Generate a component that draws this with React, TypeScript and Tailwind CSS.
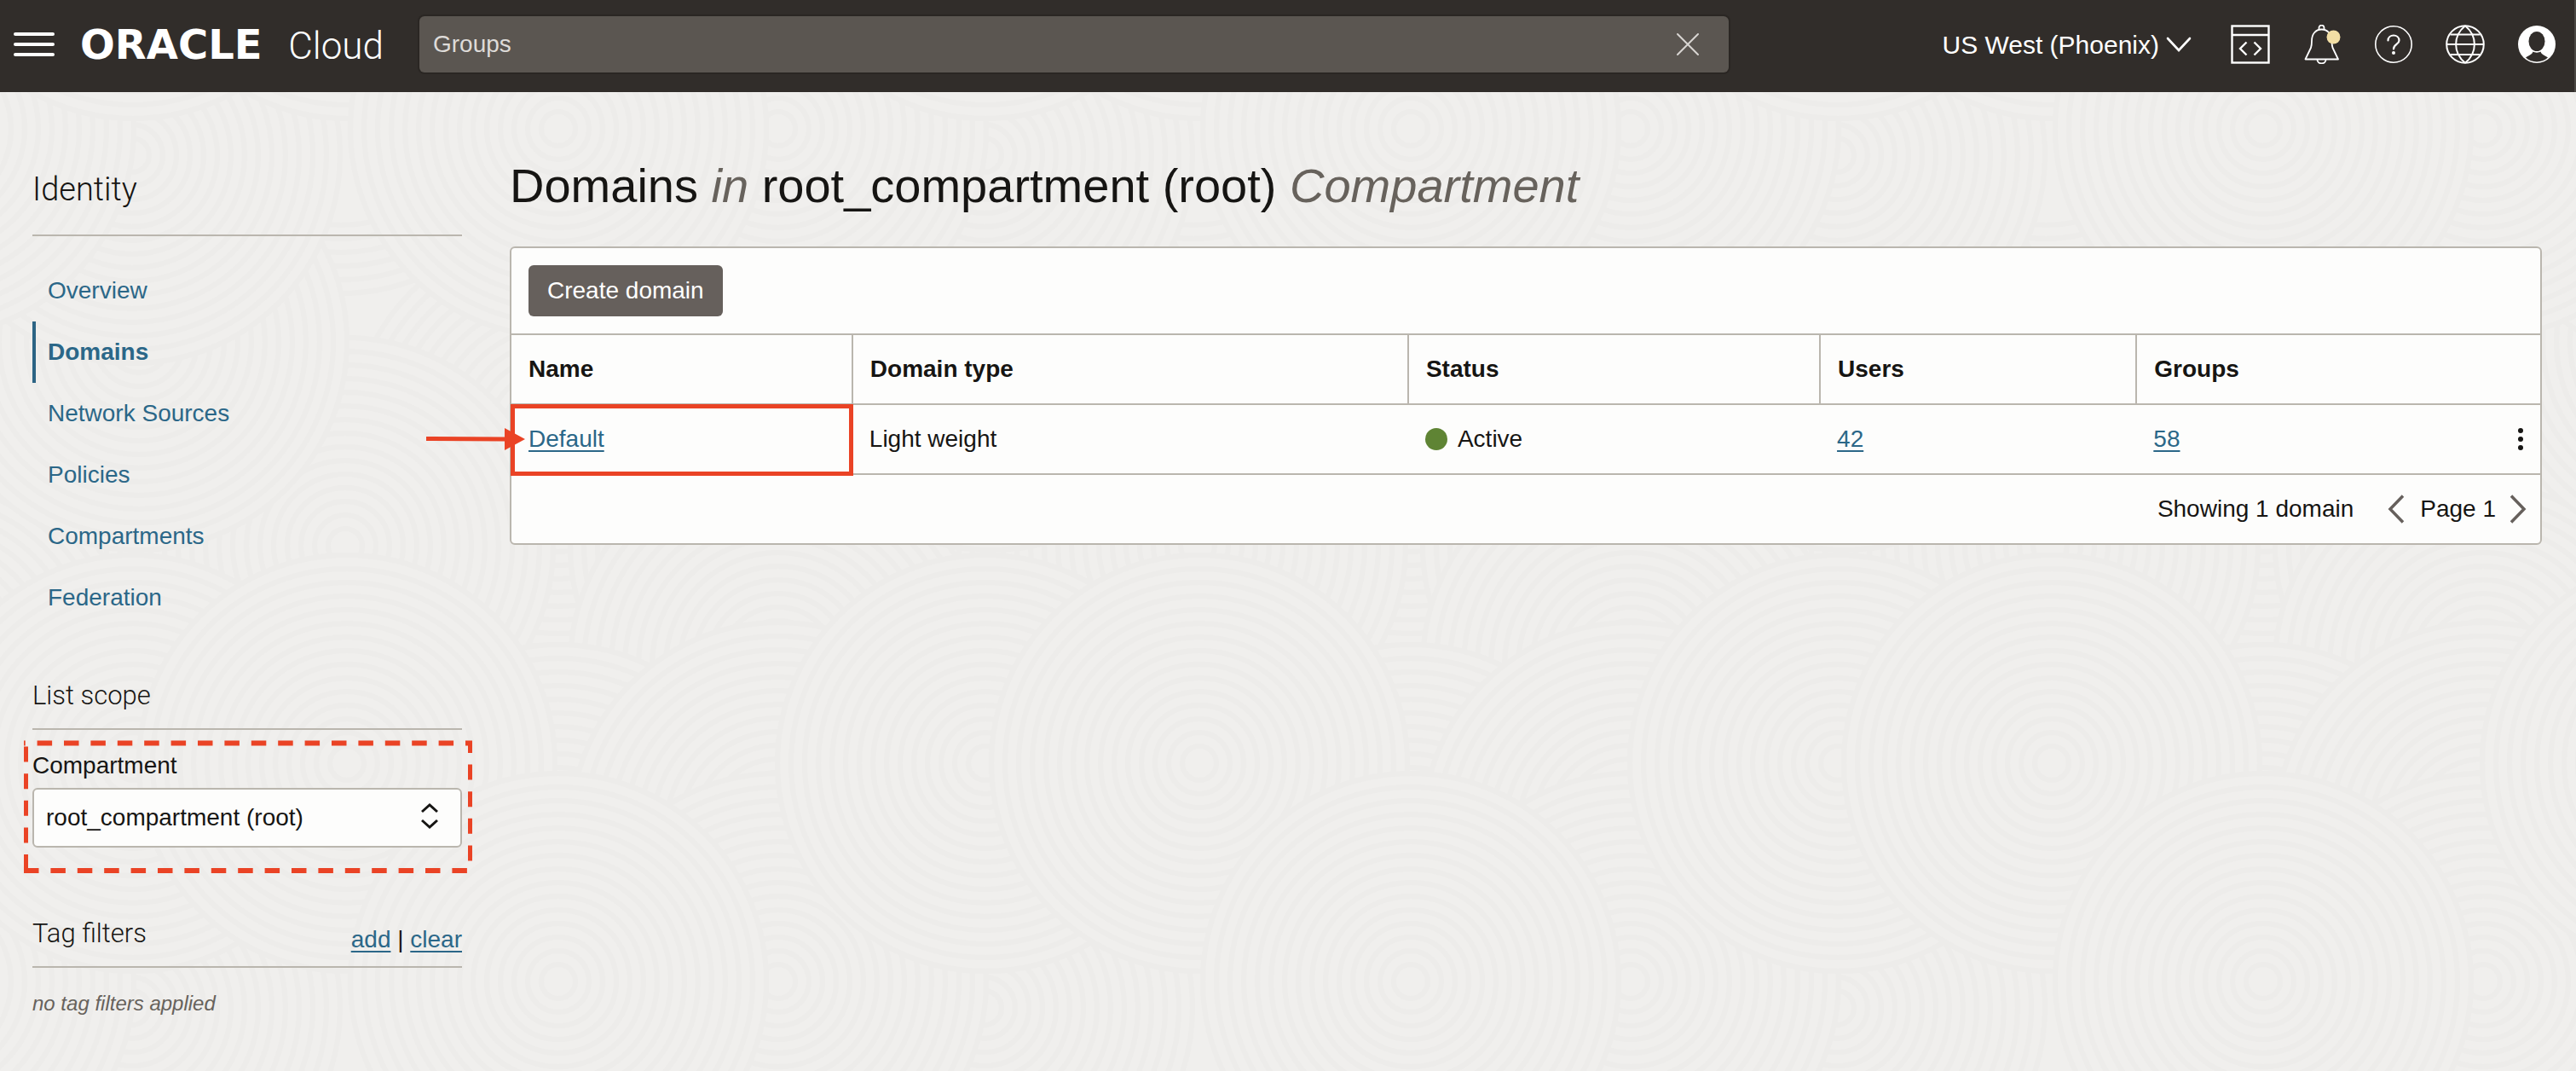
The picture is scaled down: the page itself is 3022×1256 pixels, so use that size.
import React from "react";

const navItems = ["Overview", "Domains", "Network Sources", "Policies", "Compartments", "Federation"];

const columns = ["Name", "Domain type", "Status", "Users", "Groups"];

/* Centres of the overlapping ring groups inside one 1000px background tile. */
const ringCenters: [number, number][] = [
  [400, 100],
  [905, 330],
  [655, 515],
  [405, 640],
  [913, 640],
  [913, 780],
  [163, 401],
  [155, 1182],
  [655, 1000],
  [913, 974],
  [913, 1151],
  [156, 895],
  [407, 895],
  [655, 1151],
];

const radii = [244, 228, 212, 196, 180, 164, 148, 132, 116, 100, 84, 68, 52, 36, 20];

function RingBackground() {
  return (
    <svg className="absolute inset-0 h-full w-full" aria-hidden="true">
      <defs>
        <pattern id="rings" width="1000" height="1000" x="0" y="256" patternUnits="userSpaceOnUse">
          <rect width="1000" height="1000" fill="#f0efed" />
          {ringCenters.map(([cx, cy], i) => (
            <g key={i}>
              {[-1000, 0, 1000].map((dx) =>
                [-1256, -256].map((dy) =>
                  radii.map((r) => (
                    <circle
                      key={`${dx}/${dy}/${r}`}
                      cx={cx + dx}
                      cy={cy + dy}
                      r={r}
                      fill="#f0efed"
                      stroke="#edecea"
                      strokeWidth="6"
                    />
                  )),
                ),
              )}
            </g>
          ))}
        </pattern>
      </defs>
      <rect width="100%" height="100%" fill="url(#rings)" />
    </svg>
  );
}

function CodeIcon() {
  return (
    <svg width="46" height="46" viewBox="0 0 46 46" fill="none" stroke="white" strokeWidth="2.4" aria-hidden="true">
      <rect x="1.5" y="1.5" width="43" height="43" />
      <path d="M1.5 12H44.5" />
      <path d="M18.5 20.5L11 28L18.5 35.5M27.5 20.5L35 28L27.5 35.5" />
    </svg>
  );
}

function BellIcon() {
  return (
    <svg width="46" height="46" viewBox="0 0 46 46" fill="none" stroke="white" strokeWidth="1.8" aria-hidden="true">
      <path d="M3.5 40.5H42L35.5 27C34.5 24 34.5 22 34.5 19C34.5 11 29.500 5.500 22.500 5.500C15.500 5.500 11 11 11 19C11 22 11 24 10 27Z" strokeLinejoin="round" />
      <path d="M19.500 5.800V3.500C19.500 -0.300 25.500 -0.300 25.500 3.500V5.800" />
      <path d="M17.500 41C17.500 46.700 27.500 46.700 27.500 41" />
      <circle cx="36.500" cy="14.500" r="8" fill="#f2dea4" stroke="none" />
    </svg>
  );
}

function HelpIcon() {
  return (
    <svg width="46" height="46" viewBox="0 0 46 46" fill="none" stroke="white" aria-hidden="true">
      <circle cx="23" cy="23" r="21.200" strokeWidth="1.600" />
      <path d="M16.500 18.500C16.500 10.500 29.500 10.500 29.500 18.500C29.500 23 23 23 23 28.500" strokeWidth="2.200" strokeLinecap="round" />
      <circle cx="23" cy="33" r="2" fill="white" stroke="none" />
    </svg>
  );
}

function GlobeIcon() {
  return (
    <svg width="46" height="46" viewBox="0 0 46 46" fill="none" stroke="white" strokeWidth="2" aria-hidden="true">
      <circle cx="23" cy="23" r="21.800" />
      <path d="M23 1.200C8.500 13 8.500 33 23 44.800M23 1.200C37.500 13 37.500 33 23 44.800" />
      <path d="M1.500 23H44.500M5.500 11.500H40.500M5.500 35H40.500" />
    </svg>
  );
}

function AvatarIcon() {
  return (
    <svg width="46" height="46" viewBox="0 0 46 46" aria-hidden="true">
      <circle cx="23" cy="23" r="22" fill="white" />
      <ellipse cx="23" cy="19.500" rx="9.500" ry="11.500" fill="#312d2a" />
      <path d="M18.500 31.500C20 33 26 33 27.500 31.500C28.500 35 32 35.500 36 38.500C29 45 17 45 10 38.500C14 35.500 17.500 35 18.500 31.500Z" fill="#312d2a" />
    </svg>
  );
}

function Header() {
  return (
    <header className="relative flex h-[108px] items-center border-r-2 border-[#4b4844] bg-[#312d2a] pr-[21px] pb-1 pl-4 text-white">
      <button type="button" aria-label="Navigation menu" className="flex w-12 shrink-0 flex-col gap-2">
        <span className="h-1 rounded-full bg-white" />
        <span className="h-1 rounded-full bg-white" />
        <span className="h-1 rounded-full bg-white" />
      </button>
      <a href="#" className="ml-[30px] flex w-[356px] shrink-0 items-baseline justify-between leading-none">
        <span className="font-['DejaVu_Sans',sans-serif] text-[48px] font-bold">ORACLE</span>
        <span className="font-[Roboto,sans-serif] text-[44px] font-light">Cloud</span>
      </a>
      <div className="ml-[42px] flex h-[66px] max-w-[1536px] flex-1 items-center rounded-md bg-[#5b5651] pr-[34px] pl-4 shadow-[0_0_0_2px_#2a2623]">
        <input aria-label="Search" defaultValue="Groups" className="min-w-0 flex-1 bg-transparent text-[28px] text-[#dedbd8] outline-none" />
        <button type="button" aria-label="Clear search" className="shrink-0">
          <svg width="28" height="28" viewBox="0 0 28 28" stroke="#d8d5d2" strokeWidth="2" strokeLinecap="round" aria-hidden="true">
            <path d="M2 2L26 26M26 2L2 26" />
          </svg>
        </button>
      </div>
      <button type="button" className="ml-auto flex shrink-0 items-center gap-2 text-[30px]">
        US West (Phoenix)
        <svg width="30" height="20" viewBox="0 0 30 20" fill="none" stroke="white" strokeWidth="2.600" strokeLinecap="round" aria-hidden="true">
          <path d="M2 3L15 17L28 3" />
        </svg>
      </button>
      <div className="ml-[46px] flex shrink-0 gap-[38px]">
        <button type="button" aria-label="Developer tools"><CodeIcon /></button>
        <button type="button" aria-label="Announcements"><BellIcon /></button>
        <button type="button" aria-label="Help"><HelpIcon /></button>
        <button type="button" aria-label="Language"><GlobeIcon /></button>
        <button type="button" aria-label="Profile"><AvatarIcon /></button>
      </div>
    </header>
  );
}

function Sidebar() {
  return (
    <aside className="w-[504px] shrink-0 pt-[92px]">
      <h2 className="border-b-2 border-[#bab6ae] pb-[31px] font-[Roboto,sans-serif] text-[38px] leading-[44px] font-light">Identity</h2>
      <nav className="mt-7">
        {navItems.map((item) => (
          <a
            key={item}
            href="#"
            className={
              item === "Domains"
                ? "flex h-[72px] items-center border-l-4 border-[#2c6484] pl-[14px] text-[28px] font-bold text-[#2b6788]"
                : "flex h-[72px] items-center border-l-4 border-transparent pl-[14px] text-[28px] text-[#2b6788]"
            }
          >
            {item}
          </a>
        ))}
      </nav>
      <h3 className="mt-[60px] border-b-2 border-[#bab6ae] pb-[19px] font-[Roboto,sans-serif] text-[31px] leading-[38px] font-light">List scope</h3>
      <div className="relative pt-[26px]">
        <label htmlFor="compartment" className="block text-[28px] leading-8">Compartment</label>
        <div className="relative mt-[10px]">
          <select
            id="compartment"
            className="h-[70px] w-full appearance-none rounded-md border-2 border-[#bab6ae] bg-[#fdfdfc] px-[14px] text-[28px] outline-none"
          >
            <option>root_compartment (root)</option>
          </select>
          <svg className="pointer-events-none absolute top-[17px] right-7" width="20" height="32" viewBox="0 0 20 32" fill="none" stroke="#161513" strokeWidth="3" aria-hidden="true">
            <path d="M1 11L10 3L19 11M1 21L10 29L19 21" />
          </svg>
        </div>
        <svg className="pointer-events-none absolute top-[13px] -left-[10px] h-[155px] w-[525px] overflow-visible" fill="none" stroke="#ea4325" aria-hidden="true">
          <path d="M523.500 0V153" strokeWidth="5" strokeDasharray="18 13.600" strokeDashoffset="4" />
          <path d="M526 2.500H0" strokeWidth="6" strokeDasharray="17.500 13.900" strokeDashoffset="9.500" />
          <path d="M2.500 155V0" strokeWidth="5" strokeDasharray="18 13.600" strokeDashoffset="-4" />
          <path d="M0 152H525" strokeWidth="6" strokeDasharray="17.500 13.900" />
        </svg>
      </div>
      <div className="mt-[79px] flex items-start justify-between border-b-2 border-[#bab6ae] pb-[10px]">
        <h3 className="font-[Roboto,sans-serif] text-[31px] leading-[44px] font-light">Tag filters</h3>
        <span className="pt-2 text-[28px] leading-[42px]">
          <a href="#" className="text-[#2b6788] underline decoration-2 underline-offset-4">add</a>
          {" | "}
          <a href="#" className="text-[#2b6788] underline decoration-2 underline-offset-4">clear</a>
        </span>
      </div>
      <p className="mt-[26px] text-2xl text-[#67625c] italic">no tag filters applied</p>
    </aside>
  );
}

function DomainsPanel() {
  const link = "text-[#2b6788] underline decoration-2 underline-offset-4";
  return (
    <section className="rounded-md border-2 border-[#bab6ae] bg-[#fdfdfc]">
      <div className="px-5 py-5">
        <button type="button" className="h-[60px] rounded-md bg-[#66605c] px-[22px] text-[28px] text-white">Create domain</button>
      </div>
      <table className="w-full table-fixed border-collapse text-left text-[28px]">
        <colgroup>
          <col className="w-[16.8%]" />
          <col className="w-[27.4%]" />
          <col className="w-[20.3%]" />
          <col className="w-[15.6%]" />
          <col />
        </colgroup>
        <thead>
          <tr className="h-[82px] border-y-2 border-[#bab6ae]">
            {columns.map((name) => (
              <th key={name} scope="col" className="border-r-2 border-[#bab6ae] px-5 font-bold last:border-r-0">{name}</th>
            ))}
          </tr>
        </thead>
        <tbody>
          <tr className="h-[82px] border-b-2 border-[#bab6ae]">
            <td className="relative px-5">
              <a href="#" className={link}>Default</a>
              <span className="pointer-events-none absolute -inset-x-px -top-px -bottom-[3px] border-[5px] border-[#ea4325]" />
              <svg className="pointer-events-none absolute top-1/2 -left-[100px] -translate-y-1/2" width="116" height="26" viewBox="0 0 116 26" fill="#ea4325" aria-hidden="true">
                <path d="M0 10L92 10.500V0L116 13L92 26V15.500L0 15Z" />
              </svg>
            </td>
            <td className="px-5">Light weight</td>
            <td className="px-5">
              <span className="flex items-center gap-3">
                <span className="size-[26px] rounded-full bg-[#5f8434]" />
                Active
              </span>
            </td>
            <td className="px-5"><a href="#" className={link}>42</a></td>
            <td className="px-5">
              <div className="flex items-center justify-between">
                <a href="#" className={link}>58</a>
                <button type="button" aria-label="Actions">
                  <svg width="6" height="28" viewBox="0 0 6 28" fill="#161513" aria-hidden="true">
                    <circle cx="3" cy="4" r="3" />
                    <circle cx="3" cy="14" r="3" />
                    <circle cx="3" cy="24" r="3" />
                  </svg>
                </button>
              </div>
            </td>
          </tr>
        </tbody>
      </table>
      <footer className="flex h-20 items-center justify-end pr-4 text-[28px]">
        <span>Showing 1 domain</span>
        <button type="button" aria-label="Previous page" className="ml-10">
          <svg width="20" height="34" viewBox="0 0 20 34" fill="none" stroke="#66605c" strokeWidth="3.500" aria-hidden="true">
            <path d="M18 1.500L3 17L18 32.500" />
          </svg>
        </button>
        <span className="ml-[18px]">Page 1</span>
        <button type="button" aria-label="Next page" className="ml-4">
          <svg width="20" height="34" viewBox="0 0 20 34" fill="none" stroke="#66605c" strokeWidth="3.500" aria-hidden="true">
            <path d="M2 1.500L17 17L2 32.500" />
          </svg>
        </button>
      </footer>
    </section>
  );
}

export default function App() {
  return (
    <div className="relative min-h-screen bg-[#f0efed] font-['Liberation_Sans',Arial,sans-serif] text-[#161513]">
      <RingBackground />
      <Header />
      <div className="relative flex gap-14 pr-10 pl-[38px]">
        <Sidebar />
        <main className="min-w-0 flex-1 pt-[78px]">
          <h1 className="mb-[39px] text-[56px] leading-[64px]">
            Domains <i className="text-[#67625c]">in</i> root_compartment (root) <i className="text-[#67625c]">Compartment</i>
          </h1>
          <DomainsPanel />
        </main>
      </div>
    </div>
  );
}
